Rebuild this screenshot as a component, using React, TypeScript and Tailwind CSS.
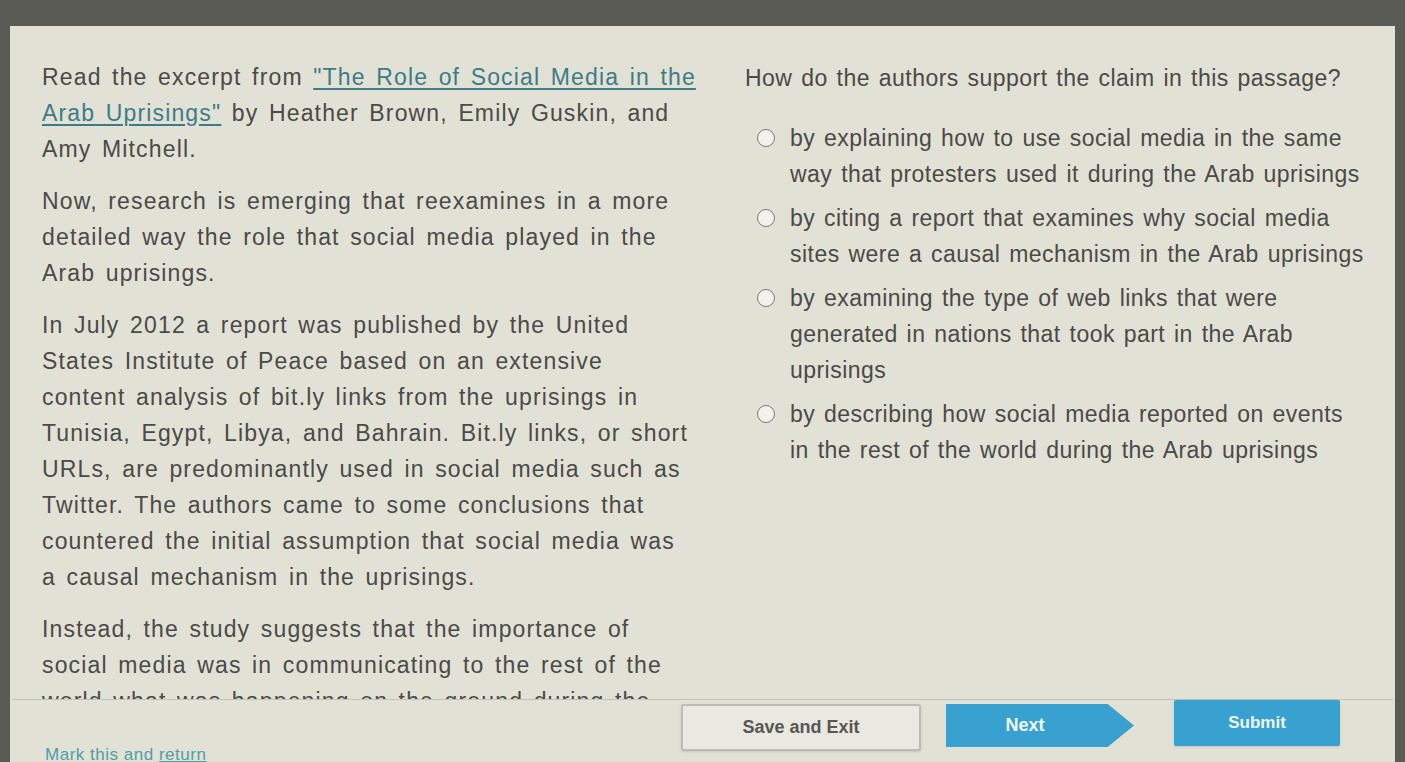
import React from 'react';

// passage lines are broken by hand so they wrap the same as the screen
const passage: string[][] = [
  [
    'Read the excerpt from LINK1',
    'LINK2 by Heather Brown, Emily Guskin, and',
    'Amy Mitchell.',
  ],
  [
    'Now, research is emerging that reexamines in a more',
    'detailed way the role that social media played in the',
    'Arab uprisings.',
  ],
  [
    'In July 2012 a report was published by the United',
    'States Institute of Peace based on an extensive',
    'content analysis of bit.ly links from the uprisings in',
    'Tunisia, Egypt, Libya, and Bahrain. Bit.ly links, or short',
    'URLs, are predominantly used in social media such as',
    'Twitter. The authors came to some conclusions that',
    'countered the initial assumption that social media was',
    'a causal mechanism in the uprisings.',
  ],
  [
    'Instead, the study suggests that the importance of',
    'social media was in communicating to the rest of the',
    'world what was happening on the ground during the',
    'Arab uprisings.',
  ],
];

const options: string[][] = [
  ['by explaining how to use social media in the same', 'way that protesters used it during the Arab uprisings'],
  ['by citing a report that examines why social media', 'sites were a causal mechanism in the Arab uprisings'],
  ['by examining the type of web links that were', 'generated in nations that took part in the Arab', 'uprisings'],
  ['by describing how social media reported on events', 'in the rest of the world during the Arab uprisings'],
];

const baseText =
  "text-[23px] leading-[36px] text-[#4a4a47] [font-family:'Liberation_Sans',Arial,sans-serif] whitespace-nowrap";

function Line({ text }: { text: string }) {
  if (text.includes('LINK1')) {
    return (
      <div>
        Read the excerpt from{' '}
        <span className="text-[#3d7c87] underline decoration-[#3d7c87] underline-offset-[3px]">
          "The Role of Social Media in the
        </span>
      </div>
    );
  }
  if (text.includes('LINK2')) {
    return (
      <div>
        <span className="text-[#3d7c87] underline decoration-[#3d7c87] underline-offset-[3px]">
          Arab Uprisings"
        </span>{' '}
        by Heather Brown, Emily Guskin, and
      </div>
    );
  }
  return <div>{text}</div>;
}

export default function App() {
  return (
    <div className="h-[762px] w-[1405px] overflow-hidden bg-[#5b5b56] pt-[26px] pl-[10px] pr-[10px]">
      <div className="flex h-full flex-col bg-[#e2e1d6]">
        <div className="mx-[2px] flex h-[674px] shrink-0 overflow-hidden border-b border-[#c3c2b6]">
          <div className={`w-[705px] shrink-0 pl-[30px] pt-[33px] tracking-[0.05em] [word-spacing:3px] ${baseText}`}>
            {passage.map((para, i) => (
              <div key={i} className="mb-[16px]">
                {para.map((l, j) => (
                  <Line key={j} text={l} />
                ))}
              </div>
            ))}
          </div>

          <div className={`pl-[28px] pt-[34px] tracking-[0.02em] [word-spacing:2px] ${baseText}`}>
            <div className="mb-[24px]">How do the authors support the claim in this passage?</div>
            <div className="flex flex-col gap-[8px] pl-[12px]">
              {options.map((opt, i) => (
                <div key={i} className="flex items-start">
                  <div className="mt-[9px] mr-[15px] h-[18px] w-[18px] shrink-0 rounded-full border-[1.5px] border-[#7a7a76] bg-[#f2f1ea]" />
                  <div>
                    {opt.map((l, j) => (
                      <div key={j}>{l}</div>
                    ))}
                  </div>
                </div>
              ))}
            </div>
          </div>
        </div>

        {/* footer with actions */}
        <div className="flex flex-1 items-start pt-[4px] [font-family:'Liberation_Sans',Arial,sans-serif]">
          <div className="w-[671px] shrink-0 self-end pl-[35px] text-[17px] leading-[22px] tracking-[0.03em] text-[#4f9ea6] translate-y-[4px]">
            Mark this and <span className="underline">return</span>
          </div>
          <button className="h-[47px] w-[240px] rounded-[3px] border-2 border-[#bdbcb2] bg-[#e9e8e1] text-[18px] font-bold text-[#575754] shadow-sm">
            Save and Exit
          </button>
          <button className="ml-[25px] h-[43px] w-[188px] bg-[#39a1d0] pr-[30px] text-[18px] font-bold text-[#eef6fa] [clip-path:polygon(0_0,86%_0,100%_50%,86%_100%,0_100%)]">
            Next
          </button>
          <button className="ml-[40px] -mt-[4px] h-[46px] w-[166px] rounded-[2px] bg-[#39a1d0] text-[17px] font-bold text-[#eef6fa] shadow-sm">
            Submit
          </button>
        </div>
      </div>
    </div>
  );
}
